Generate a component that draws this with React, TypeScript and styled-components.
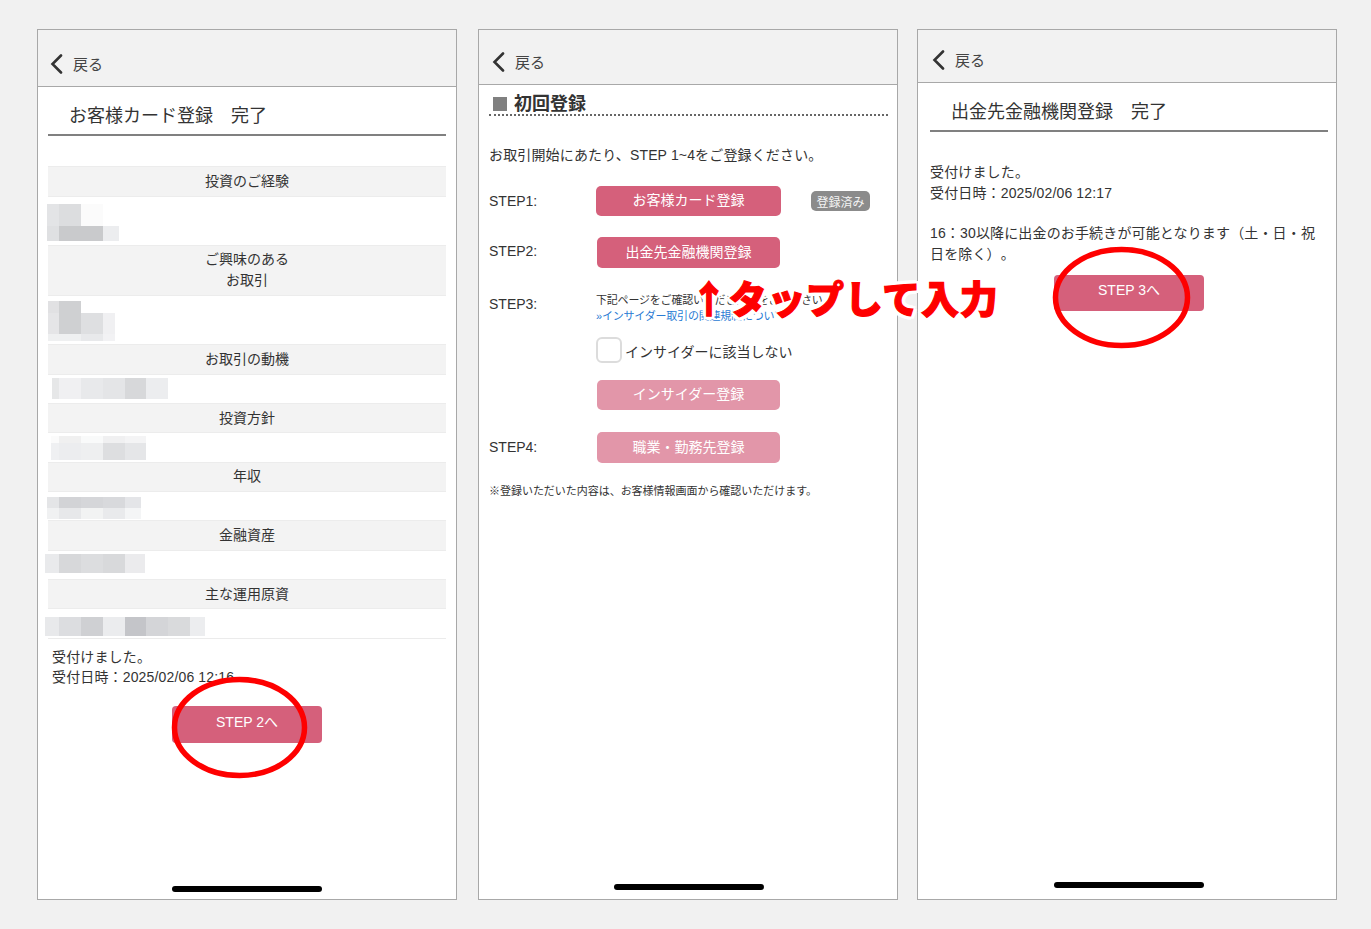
import React from "react";
import styled, { createGlobalStyle } from "styled-components";

const Global = createGlobalStyle`
  html, body { margin: 0; padding: 0; background: #f1f1f1; }
  body {
    font-family: "Liberation Sans", "Noto Sans CJK JP", sans-serif;
    color: #333;
    overflow: hidden;
    text-spacing-trim: space-all;
  }
`;

const Page = styled.div`
  position: relative;
  width: 1371px;
  height: 929px;
  box-sizing: border-box;
  padding: 29px 0 0 37px;
  display: flex;
  align-items: flex-start;
  background: #f1f1f1;
`;

const Phone = styled.section<{ $offset?: number }>`
  width: 420px;
  height: 871px;
  box-sizing: border-box;
  margin-left: ${(p) => p.$offset ?? 0}px;
  border: 1px solid #a8a8a8;
  background: #fff;
  display: flex;
  flex-direction: column;
`;

const NavBar = styled.header<{ $h: number; $left: number }>`
  height: ${(p) => p.$h}px;
  box-sizing: border-box;
  flex: none;
  display: flex;
  align-items: flex-end;
  gap: 10px;
  padding: 0 0 12px ${(p) => p.$left}px;
  background: #f2f2f2;
  border-bottom: 1px solid #a8a8a8;
`;

const BackLabel = styled.span`
  margin-bottom: -1px;
  font-size: 15px;
  line-height: 20px;
  color: #444;
`;

const Body = styled.div<{ $left: number; $right: number }>`
  flex: 1;
  margin: 0 ${(p) => p.$right}px 0 ${(p) => p.$left}px;
  display: flex;
  flex-direction: column;
`;

const PageTitle = styled.h1`
  margin: 0;
  padding: 15px 0 4px 21px;
  font-size: 18px;
  line-height: 28px;
  font-weight: 400;
  color: #333;
  border-bottom: 2px solid #808080;
`;

const InfoBar = styled.div<{ $h: number; $top?: number; $lift?: number }>`
  height: ${(p) => p.$h}px;
  box-sizing: border-box;
  margin-top: ${(p) => p.$top ?? 0}px;
  padding-bottom: ${(p) => p.$lift ?? 0}px;
  display: flex;
  align-items: center;
  justify-content: center;
  text-align: center;
  font-size: 14px;
  line-height: 21px;
  color: #333;
  background: #f3f3f3;
  border-top: 1px solid #ececec;
  border-bottom: 1px solid #ececec;
`;

const MosaicBox = styled.div<{ $left: number; $top: number; $bottom: number }>`
  margin: ${(p) => p.$top}px 0 ${(p) => p.$bottom}px ${(p) => p.$left}px;
`;

const MosaicRow = styled.div<{ $h: number }>`
  height: ${(p) => p.$h}px;
  display: flex;
`;

const MosaicCell = styled.i<{ $w: number; $c: string }>`
  display: block;
  width: ${(p) => p.$w}px;
  background: ${(p) => p.$c};
`;

const Rule = styled.div`
  height: 1px;
  background: #ebebeb;
`;

const Copy = styled.p<{ $top?: number; $left?: number; $lh?: number }>`
  margin: ${(p) => p.$top ?? 0}px 0 0 ${(p) => p.$left ?? 0}px;
  font-size: 14px;
  line-height: ${(p) => p.$lh ?? 20}px;
  letter-spacing: 0.15px;
  color: #333;
`;

const StepAnchor = styled.div<{ $top: number }>`
  position: relative;
  width: 150px;
  margin: ${(p) => p.$top}px auto 0;
`;

const NextButton = styled.div<{ $h: number; $pad: number }>`
  height: ${(p) => p.$h}px;
  box-sizing: border-box;
  padding-top: ${(p) => p.$pad}px;
  text-align: center;
  font-size: 14px;
  line-height: 18px;
  color: #fff;
  background: #d5607b;
  border-radius: 4px;
`;

const RedRing = styled.svg<{ $left: number; $top: number; $w: number }>`
  position: absolute;
  left: ${(p) => p.$left}px;
  top: ${(p) => p.$top}px;
  width: ${(p) => p.$w}px;
  height: 101px;
  overflow: visible;
`;

const HomeBar = styled.div<{ $bottom: number }>`
  width: 150px;
  height: 6px;
  flex: none;
  margin: auto auto ${(p) => p.$bottom}px;
  border-radius: 3px;
  background: #000;
`;

const SectionHead = styled.h2`
  margin: 0;
  padding: 9px 0 0 4px;
  display: flex;
  align-items: center;
  gap: 7px;
  font-size: 18px;
  line-height: 20px;
  font-weight: 700;
  color: #333;
  border-bottom: 2px dotted #666;
`;

const HeadMark = styled.span`
  width: 14px;
  height: 14px;
  background: #808080;
`;

const StepRow = styled.div<{ $top: number; $start?: boolean }>`
  display: flex;
  align-items: ${(p) => (p.$start ? "flex-start" : "center")};
  margin-top: ${(p) => p.$top}px;
`;

const StepLabel = styled.div<{ $top?: number }>`
  width: 107px;
  flex: none;
  margin-top: ${(p) => p.$top ?? 0}px;
  font-size: 14px;
  line-height: 20px;
  color: #333;
`;

const PinkButton = styled.div<{ $w: number; $h: number; $shift?: number; $muted?: boolean; $top?: number }>`
  width: ${(p) => p.$w}px;
  height: ${(p) => p.$h}px;
  box-sizing: border-box;
  flex: none;
  margin: ${(p) => p.$top ?? 0}px 0 0 ${(p) => p.$shift ?? 0}px;
  padding-bottom: 4px;
  display: flex;
  align-items: center;
  justify-content: center;
  font-size: 14px;
  color: #fff;
  background: ${(p) => (p.$muted ? "#e296a9" : "#d5607b")};
  border-radius: 5px;
`;

const DoneBadge = styled.span`
  width: 59px;
  height: 20px;
  margin-left: 30px;
  display: flex;
  align-items: center;
  justify-content: center;
  font-size: 12px;
  color: #f4f4f4;
  background: #8b8b8b;
  border-radius: 5px;
`;

const StepDetail = styled.div`
  min-width: 0;
`;

const SmallNote = styled.div`
  font-size: 11px;
  line-height: 16px;
  letter-spacing: -0.2px;
  white-space: nowrap;
  color: #333;
`;

const InsiderLink = styled(SmallNote)`
  color: #2a7bd4;
`;

const CheckRow = styled.label`
  height: 26px;
  margin-top: 13px;
  display: flex;
  align-items: center;
  gap: 3px;
  font-size: 14px;
  color: #333;
`;

const CheckText = styled.span`
  padding-top: 4px;
  line-height: 20px;
`;

const CheckBox = styled.span`
  width: 26px;
  height: 26px;
  box-sizing: border-box;
  border: 2px solid #dcdcdc;
  border-radius: 6px;
  background: #fff;
`;

const FootNote = styled.p`
  margin: 20px 0 0;
  font-size: 11px;
  line-height: 16px;
  letter-spacing: -0.03px;
  color: #333;
`;

const TapOverlay = styled.div`
  position: absolute;
  left: 690px;
  top: 270px;
  white-space: nowrap;
  font-family: "Noto Sans CJK JP", sans-serif;
  font-size: 38px;
  line-height: 54px;
  font-weight: 900;
  letter-spacing: 0.7px;
  color: #fe0000;
  -webkit-text-stroke: 1.2px #fe0000;
  text-shadow: 4px 0 0 #fff, -4px 0 0 #fff, 0 4px 0 #fff, 0 -4px 0 #fff, 3px 3px 0 #fff, -3px 3px 0 #fff, 3px -3px 0 #fff,
    -3px -3px 0 #fff, 2px 0 0 #fff, -2px 0 0 #fff, 0 2px 0 #fff, 0 -2px 0 #fff;
`;

type Cell = [number, string];
type Band = { h: number; cells: Cell[] };

const Mosaic = ({ left, top, bottom, bands }: { left: number; top: number; bottom: number; bands: Band[] }) => (
  <MosaicBox $left={left} $top={top} $bottom={bottom}>
    {bands.map((band, i) => (
      <MosaicRow key={i} $h={band.h}>
        {band.cells.map(([w, c], j) => (
          <MosaicCell key={j} $w={w} $c={c} />
        ))}
      </MosaicRow>
    ))}
  </MosaicBox>
);

const Back = ({ h, left }: { h: number; left: number }) => (
  <NavBar $h={h} $left={left}>
    <svg width="13" height="20" viewBox="0 0 13 20" fill="none" stroke="#333" strokeWidth="2.6" strokeLinecap="round" strokeLinejoin="miter">
      <path d="M11 1.5 L2.5 10 L11 18.5" />
    </svg>
    <BackLabel>戻る</BackLabel>
  </NavBar>
);

const Ring = ({ left, top, w }: { left: number; top: number; w: number }) => (
  <RedRing $left={left} $top={top} $w={w} viewBox={`0 0 ${w} 101`} fill="none">
    <ellipse cx={w / 2} cy="50.5" rx={w / 2 - 2.5} ry="48" stroke="#fe0000" strokeWidth="5.5" />
  </RedRing>
);

export default function App() {
  return (
    <Page>
      <Global />
      <Phone>
        <Back h={57} left={12} />
        <Body $left={10} $right={10}>
          <PageTitle>お客様カード登録　完了</PageTitle>
          <InfoBar $h={31} $top={30}>投資のご経験</InfoBar>
          <Mosaic left={-1} top={7} bottom={4} bands={[
            { h: 22, cells: [[12, "#e3e4e6"], [22, "#dcdddf"], [22, "#fbfbfb"]] },
            { h: 15, cells: [[12, "#dfe0e2"], [44, "#c9cacc"], [16, "#ecedef"]] },
          ]} />
          <InfoBar $h={51} $lift={1}>ご興味のある<br />お取引</InfoBar>
          <Mosaic left={0} top={5} bottom={3} bands={[
            { h: 12, cells: [[11, "#e1e1e3"], [22, "#cfd0d2"]] },
            { h: 21, cells: [[11, "#e5e5e7"], [22, "#cfd0d2"], [22, "#dedfe1"], [12, "#f0f0f2"]] },
            { h: 7, cells: [[33, "#eff0f1"], [22, "#e8e9eb"], [12, "#f2f2f4"]] },
          ]} />
          <InfoBar $h={31}>お取引の動機</InfoBar>
          <Mosaic left={4} top={3} bottom={4} bands={[
            { h: 21, cells: [[7, "#e6e7e8"], [22, "#f0f0f2"], [22, "#e8e9eb"], [22, "#e4e5e7"], [21, "#d7d8da"], [22, "#ecedef"]] },
          ]} />
          <InfoBar $h={30}>投資方針</InfoBar>
          <Mosaic left={3} top={3} bottom={2} bands={[
            { h: 7, cells: [[8, "#fbfbfb"], [22, "#f0f0f0"], [22, "#f9fafa"], [22, "#f0f0f1"], [21, "#f4f4f5"]] },
            { h: 17, cells: [[8, "#eff0f2"], [22, "#ecedef"], [22, "#eeeff0"], [22, "#dddee0"], [21, "#e5e6e8"]] },
          ]} />
          <InfoBar $h={30} $lift={1}>年収</InfoBar>
          <Mosaic left={-1} top={5} bottom={1} bands={[
            { h: 11, cells: [[12, "#e4e5e7"], [22, "#d2d3d6"], [22, "#d5d6d9"], [22, "#d8d9dc"], [16, "#e4e5e8"]] },
            { h: 11, cells: [[12, "#f0f1f2"], [22, "#e7e8ea"], [22, "#f2f3f3"], [22, "#e9eaec"], [16, "#f4f5f6"]] },
          ]} />
          <InfoBar $h={31}>金融資産</InfoBar>
          <Mosaic left={-3} top={3} bottom={6} bands={[
            { h: 19, cells: [[14, "#e9eaec"], [22, "#d7d8da"], [22, "#dcdddf"], [22, "#d8d9db"], [20, "#ebebed"]] },
          ]} />
          <InfoBar $h={30}>主な運用原資</InfoBar>
          <Mosaic left={-3} top={8} bottom={2} bands={[
            { h: 19, cells: [[14, "#e8e9eb"], [22, "#dcdde0"], [22, "#cfd0d3"], [22, "#ebecee"], [21, "#c4c5c9"], [22, "#d4d5d8"], [22, "#d9dadc"], [15, "#ecedef"]] },
          ]} />
          <Rule />
          <Copy $top={8} $left={4}>受付けました。<br />受付日時：2025/02/06 12:16</Copy>
          <StepAnchor $top={19}>
            <NextButton $h={37} $pad={7}>STEP 2へ</NextButton>
            <Ring left={0} top={-29} w={135} />
          </StepAnchor>
          <HomeBar $bottom={7} />
        </Body>
      </Phone>

      <Phone $offset={21}>
        <Back h={55} left={13} />
        <Body $left={10} $right={9}>
          <SectionHead><HeadMark />初回登録</SectionHead>
          <Copy $top={29}>お取引開始にあたり、STEP 1~4をご登録ください。</Copy>
          <StepRow $top={21}>
            <StepLabel>STEP1:</StepLabel>
            <PinkButton $w={185} $h={30}>お客様カード登録</PinkButton>
            <DoneBadge>登録済み</DoneBadge>
          </StepRow>
          <StepRow $top={21}>
            <StepLabel $top={-4}>STEP2:</StepLabel>
            <PinkButton $w={183} $h={31} $shift={1}>出金先金融機関登録</PinkButton>
          </StepRow>
          <StepRow $top={24} $start>
            <StepLabel $top={2}>STEP3:</StepLabel>
            <StepDetail>
              <SmallNote>下記ページをご確認いただき内容をご覧下さい</SmallNote>
              <InsiderLink>»インサイダー取引の関連規制について</InsiderLink>
              <CheckRow><CheckBox /><CheckText>インサイダーに該当しない</CheckText></CheckRow>
              <PinkButton $w={183} $h={30} $shift={1} $top={17} $muted>インサイダー登録</PinkButton>
            </StepDetail>
          </StepRow>
          <StepRow $top={22}>
            <StepLabel $top={-2}>STEP4:</StepLabel>
            <PinkButton $w={183} $h={31} $shift={1} $muted>職業・勤務先登録</PinkButton>
          </StepRow>
          <FootNote>※登録いただいた内容は、お客様情報画面から確認いただけます。</FootNote>
          <HomeBar $bottom={9} />
        </Body>
      </Phone>

      <Phone $offset={19}>
        <Back h={53} left={14} />
        <Body $left={12} $right={8}>
          <PageTitle>出金先金融機関登録　完了</PageTitle>
          <Copy $top={30} $lh={20.5}>受付けました。<br />受付日時：2025/02/06 12:17</Copy>
          <Copy $top={20} $lh={20.5}>16：30以降に出金のお手続きが可能となります（土・日・祝<br />日を除く）。</Copy>
          <StepAnchor $top={11}>
            <NextButton $h={36} $pad={6}>STEP 3へ</NextButton>
            <Ring left={-1} top={-28} w={137} />
          </StepAnchor>
          <HomeBar $bottom={11} />
        </Body>
      </Phone>

      <TapOverlay>↑タップして入力</TapOverlay>
    </Page>
  );
}
